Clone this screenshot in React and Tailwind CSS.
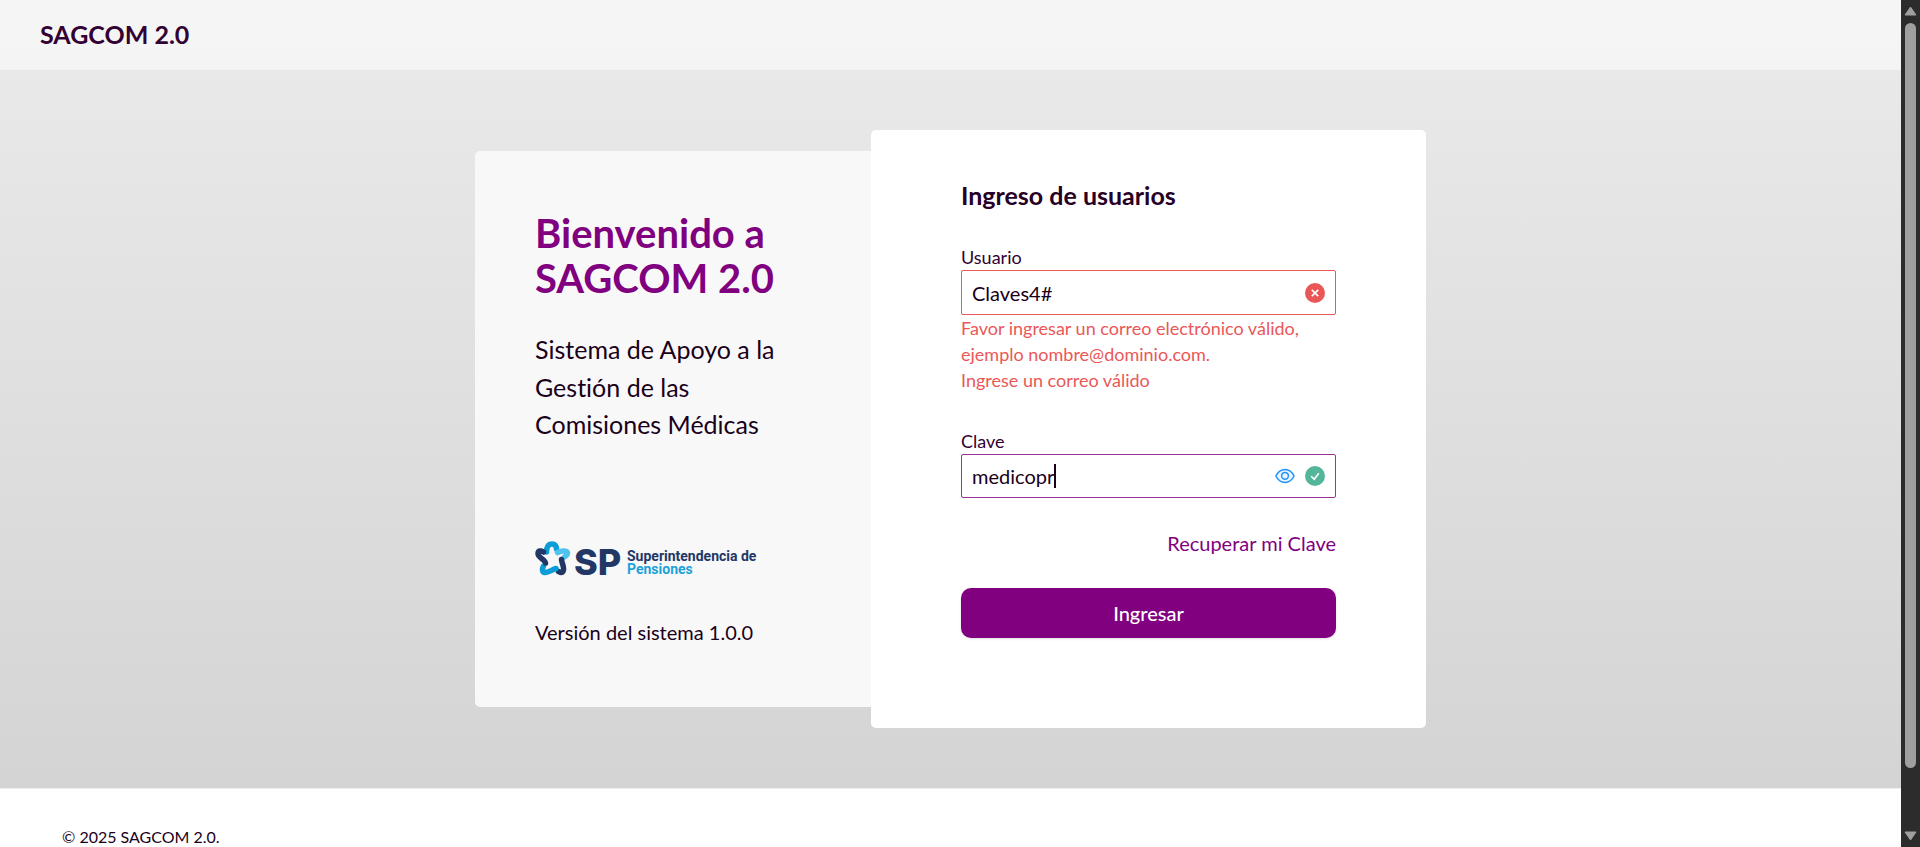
import { useState } from "react";

function ErrorBadge() {
  return (
    <svg viewBox="0 0 20 20" className="size-5" aria-hidden="true">
      <circle cx="10" cy="10" r="10" fill="#eb5757" />
      <path d="M6.8 6.8l6.400 6.400M13.200 6.800l-6.400 6.400" stroke="#fff" strokeWidth="1.7" />
    </svg>
  );
}

function OkBadge() {
  return (
    <svg viewBox="0 0 20 20" className="size-5" aria-hidden="true">
      <circle cx="10" cy="10" r="10" fill="#53b59a" />
      <path d="M6.2 10.2l3 3l4.6-6" fill="none" stroke="#fff" strokeWidth="1.6" />
    </svg>
  );
}

function EyeIcon() {
  return (
    <svg viewBox="0 0 20 16" className="h-4 w-5" aria-hidden="true">
      <path d="M.9 8C3 3.6 6.2 1.4 10 1.4S17 3.6 19.1 8C17 12.4 13.8 14.4 10 14.4S3 12.4 .9 8Z" fill="#eaf5ff" stroke="#2492fb" strokeWidth="1.5" />
      <circle cx="10" cy="7.8" r="3.4" fill="#eaf5ff" stroke="#2492fb" strokeWidth="1.5" />
    </svg>
  );
}

function Logo() {
  return (
    <svg viewBox="0 0 223 44" className="h-11 w-[223px] overflow-visible" role="img" aria-label="Superintendencia de Pensiones">
      <g fill="none" strokeLinecap="round" strokeLinejoin="round" strokeWidth="5.5">
        <path d="M11.500 12C11.500 7 13.500 4 17 4C20 4 21.500 6 21.500 9" stroke="#0d9dd6" />
        <path d="M22.500 12.500C26 10.500 32 10 32.500 13C32.500 15 31 16 29.500 17" stroke="#4fc3ee" />
        <path d="M26.500 19.500C27 24 30 28 28 31.500C27 33 25 32.500 23.500 31.500" stroke="#223766" />
        <path d="M21 28.500C17 29.500 14 33 9.500 32.500C7 32 7 29 8.500 26" stroke="#0d9dd6" />
        <path d="M10.500 23C10 19 3 18 3 13.500C3 10.500 6 10.500 8.500 12" stroke="#223766" />
      </g>
      <text x="39" y="35" fill="#223766" className="font-['Inter',sans-serif] text-[36px] font-extrabold">SP</text>
      <text x="92" y="21" fill="#223766" className="font-['Roboto',sans-serif] text-[14px] font-bold">Superintendencia de</text>
      <text x="92" y="34" fill="#1ba3d8" className="font-['Roboto',sans-serif] text-[14px] font-bold">Pensiones</text>
    </svg>
  );
}

export default function App() {
  const [user, setUser] = useState("Claves4#");
  const [password, setPassword] = useState("medicopr");
  const [visible, setVisible] = useState(true);

  return (
    <div className="flex h-screen overflow-hidden font-['Lato',sans-serif] text-[#1a0019] [font-variant-ligatures:none]">
      <div className="min-w-0 flex-1 overflow-hidden bg-white">
        <div className="bg-linear-to-b from-[#ebebeb] to-[#d4d4d4]">
          <header className="flex h-[70px] items-center bg-white/50 px-10">
            <a href="#" className="text-[25px] font-bold text-[#330033]">SAGCOM 2.0</a>
          </header>
          <main className="flex items-center justify-center py-[60px]">
            <section className="w-[396px] rounded-l-[5px] bg-[#f8f8f8] p-[60px]">
              <h1 className="text-[40px] leading-[45px] font-bold text-[#800080]">
                Bienvenido a<br />SAGCOM 2.0
              </h1>
              <p className="mt-[30px] text-[25px] leading-normal">Sistema de Apoyo a la Gestión de las Comisiones Médicas</p>
              <div className="mt-24"><Logo /></div>
              <p className="mt-[33px] text-xl leading-[30px]">Versión del sistema 1.0.0</p>
            </section>
            <section className="w-[555px] rounded-[5px] bg-white px-[90px] pt-[50px] pb-[90px]">
              <h2 className="text-[25px] leading-[30px] font-bold text-[#260026]">Ingreso de usuarios</h2>
              <form className="mt-[34px]" onSubmit={(e) => e.preventDefault()}>
                <label htmlFor="user" className="block text-lg leading-[26px] text-[#330033]">Usuario</label>
                <div className="flex h-[45px] items-center rounded-[2px] border border-[#eb5757] pr-2.5">
                  <input id="user" value={user} onChange={(e) => setUser(e.target.value)} className="min-w-0 flex-1 px-2.5 text-xl outline-none" />
                  <ErrorBadge />
                </div>
                <p className="text-lg leading-[26px] text-[#eb5757]">
                  Favor ingresar un correo electrónico válido, ejemplo nombre@dominio.com.<br />Ingrese un correo válido
                </p>
                <label htmlFor="password" className="mt-[35px] block text-lg leading-[26px] text-[#330033]">Clave</label>
                <div className="flex h-11 items-center gap-2.5 rounded-[2px] border border-[#993399] px-2.5">
                  <div className="flex min-w-0 flex-1 items-center">
                    <input id="password" type={visible ? "text" : "password"} value={password} onChange={(e) => setPassword(e.target.value)} className="field-sizing-content max-w-full text-xl outline-none" />
                    <span className="h-6 w-0.5 bg-[#1a0019]" />
                  </div>
                  <button type="button" aria-label="Mostrar clave" onClick={() => setVisible(!visible)}><EyeIcon /></button>
                  <OkBadge />
                </div>
                <div className="mt-[30px] text-right">
                  <a href="#" className="text-xl leading-[30px] text-[#800080]">Recuperar mi Clave</a>
                </div>
                <button type="submit" className="mt-[30px] h-[50px] w-full rounded-[10px] bg-[#800080] text-xl font-medium text-white shadow-sm">Ingresar</button>
              </form>
            </section>
          </main>
        </div>
        <footer className="border-t border-[#eeeeee] px-[62px] pt-9">
          <p className="text-base leading-6">© 2025 SAGCOM 2.0.</p>
        </footer>
      </div>
      <div className="flex w-[19px] flex-col items-center justify-between bg-[#2c2c2c] py-1.5" aria-hidden="true">
        <svg viewBox="0 0 13 10" className="h-2.5 w-[13px]"><path d="M6.5 1L12 9H1Z" fill="#9f9f9f" stroke="#9f9f9f" strokeLinejoin="round" /></svg>
        <div className="mt-[7px] mb-[63px] w-[11px] flex-1 rounded-full bg-[#9f9f9f]" />
        <svg viewBox="0 0 13 10" className="h-2.5 w-[13px]"><path d="M6.5 9L12 1H1Z" fill="#9f9f9f" stroke="#9f9f9f" strokeLinejoin="round" /></svg>
      </div>
    </div>
  );
}
